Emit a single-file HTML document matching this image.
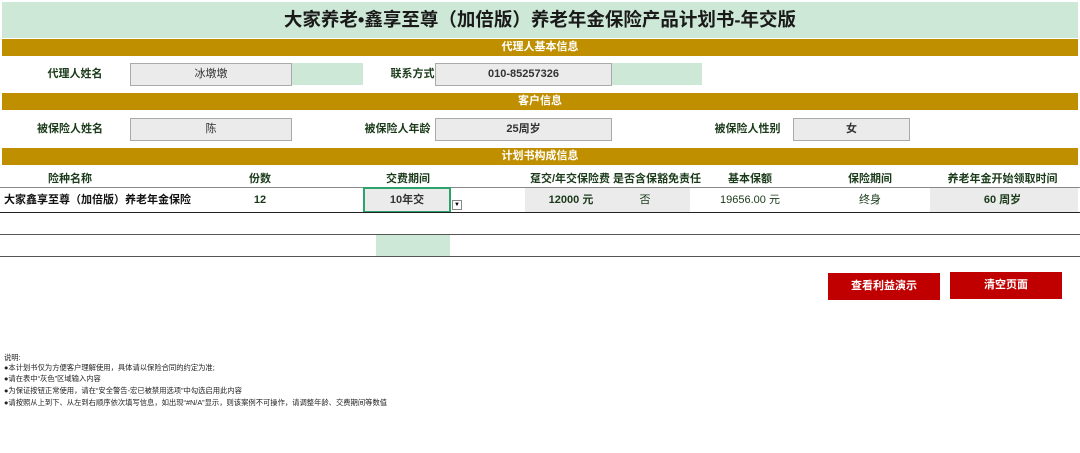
<!DOCTYPE html><html><head><meta charset="utf-8"><style>
body{margin:0;width:1080px;height:453px;background:#fff;position:relative;overflow:hidden;font-family:"Liberation Sans","Noto Sans CJK SC",sans-serif;font-weight:bold;color:#1a3a1a}
div{position:absolute;box-sizing:border-box;white-space:nowrap}
.gold{left:2px;width:1076px;height:17px;background:#bf8f00;color:#fff;font-size:11px;line-height:17px;text-align:center}
.box{background:#ebebeb;border:1px solid #aaa;font-size:11px;text-align:center;line-height:21px;color:#333;font-weight:normal}
.lbl{font-size:11px;line-height:22px;text-align:center}
.hl{left:0;width:1080px;height:1px;background:#555}
.btn{background:#c00000;color:#fff;font-size:11px;text-align:center;line-height:27px}
.n{font-size:7.3px;line-height:9px;color:#222;left:4px;font-weight:normal}
</style></head><body>
<div style="left:2px;top:2px;width:1076px;height:36px;background:#cde8d6;font-size:18.5px;line-height:36px;text-align:center;color:#1a1a1a">大家养老•鑫享至尊（加倍版）养老年金保险产品计划书-年交版</div>
<div class="gold" style="top:39px">代理人基本信息</div>
<div class="lbl" style="left:20px;width:110px;top:63px">代理人姓名</div>
<div class="box" style="left:130px;top:63px;width:162px;height:23px">冰墩墩</div>
<div style="left:292px;top:63px;width:71px;height:22px;background:#cde8d6"></div>
<div class="lbl" style="left:370px;width:85px;top:63px">联系方式</div>
<div class="box" style="left:435px;top:63px;width:177px;height:23px;font-weight:bold">010-85257326</div>
<div style="left:612px;top:63px;width:90px;height:22px;background:#cde8d6"></div>
<div class="gold" style="top:93px">客户信息</div>
<div class="lbl" style="left:15px;width:110px;top:118px">被保险人姓名</div>
<div class="box" style="left:130px;top:118px;width:162px;height:23px">陈</div>
<div class="lbl" style="left:350px;width:95px;top:118px;z-index:2">被保险人年龄</div>
<div class="box" style="left:435px;top:118px;width:177px;height:23px;font-weight:bold">25周岁</div>
<div class="lbl" style="left:700px;width:95px;top:118px">被保险人性别</div>
<div class="box" style="left:793px;top:118px;width:117px;height:23px;font-weight:bold">女</div>
<div class="gold" style="top:148px">计划书构成信息</div>
<div class="lbl" style="top:168px;left:20px;width:100px">险种名称</div>
<div class="lbl" style="top:168px;left:225px;width:70px">份数</div>
<div class="lbl" style="top:168px;left:363px;width:90px">交费期间</div>
<div class="lbl" style="top:168px;left:525px;width:90px">趸交/年交保险费</div>
<div class="lbl" style="top:168px;left:612px;width:90px">是否含保豁免责任</div>
<div class="lbl" style="top:168px;left:705px;width:90px">基本保额</div>
<div class="lbl" style="top:168px;left:825px;width:90px">保险期间</div>
<div class="lbl" style="top:168px;left:930px;width:145px">养老年金开始领取时间</div>
<div class="hl" style="top:187px;background:#888"></div>
<div class="lbl" style="top:188px;left:4px;width:200px;text-align:left;line-height:24px;color:#111">大家鑫享至尊（加倍版）养老年金保险</div>
<div class="lbl" style="top:188px;left:225px;width:70px;line-height:24px">12</div>
<div style="left:525px;top:188px;width:165px;height:24px;background:#ebebeb"></div>
<div style="left:930px;top:188px;width:148px;height:24px;background:#ebebeb"></div>
<div style="left:363px;top:187px;width:88px;height:26px;border:2px solid #2da36b;background:#ebebeb;font-size:11px;line-height:22px;text-align:center;color:#333">10年交</div>
<div style="left:452px;top:200px;width:10px;height:10px;border:1px solid #888;background:#fff;font-size:6px;line-height:8px;text-align:center;color:#000">▼</div>
<div class="lbl" style="top:188px;left:525px;width:92px;line-height:24px">12000 元</div>
<div class="lbl" style="top:188px;left:610px;width:70px;line-height:24px;font-weight:normal">否</div>
<div class="lbl" style="top:188px;left:705px;width:90px;line-height:24px;font-weight:normal">19656.00 元</div>
<div class="lbl" style="top:188px;left:825px;width:90px;line-height:24px;font-weight:normal">终身</div>
<div class="lbl" style="top:188px;left:930px;width:145px;line-height:24px">60 周岁</div>
<div class="hl" style="top:212px;background:#222"></div>
<div class="hl" style="top:234px"></div>
<div style="left:376px;top:235px;width:74px;height:21px;background:#cde8d6"></div>
<div class="hl" style="top:256px"></div>
<div class="btn" style="left:828px;top:273px;width:112px;height:27px">查看利益演示</div>
<div class="btn" style="left:950px;top:272px;width:112px;height:27px">清空页面</div>
<div class="n" style="top:353px">说明:</div>
<div class="n" style="top:363px">●本计划书仅为方便客户理解使用，具体请以保险合同的约定为准;</div>
<div class="n" style="top:374px">●请在表中“灰色”区域输入内容</div>
<div class="n" style="top:386px">●为保证按钮正常使用，请在“安全警告-宏已被禁用选项”中勾选启用此内容</div>
<div class="n" style="top:398px">●请按照从上到下、从左到右顺序依次填写信息，如出现“#N/A”显示，则该案例不可操作，请调整年龄、交费期间等数值</div>
</body></html>
